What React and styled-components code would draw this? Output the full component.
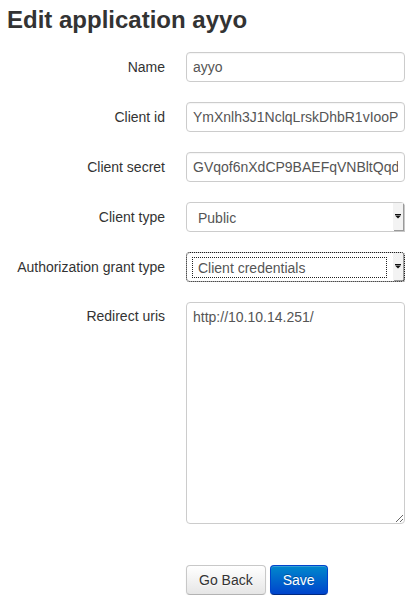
import styled, { createGlobalStyle } from 'styled-components';

const GlobalStyle = createGlobalStyle`
  html, body {
    margin: 0;
    padding: 0;
    background: #fff;
  }
  body {
    font-family: "Liberation Sans", Arial, sans-serif;
    font-size: 14px;
    color: #333;
  }
`;

const Page = styled.div`
  padding: 4px 13px 0 7px;
`;

const Title = styled.h2`
  margin: 0 0 16px 0;
  font-size: 24px;
  line-height: 32px;
  font-weight: bold;
  color: #333;
`;

const Form = styled.form`
  display: grid;
  grid-template-columns: 158px 219px;
  column-gap: 21px;
  row-gap: 20px;
  align-items: center;
`;

const Label = styled.label`
  text-align: right;
  font-size: 14px;
  color: #333;
  align-self: ${(p) => (p.top ? 'start' : 'center')};
  padding-top: ${(p) => (p.top ? '6px' : '0')};
  white-space: nowrap;
`;

const TextInput = styled.input`
  box-sizing: border-box;
  width: 219px;
  height: 30px;
  padding: 0 6px;
  border: 1px solid #ccc;
  border-radius: 4px;
  font-family: "Liberation Sans", Arial, sans-serif;
  font-size: 14px;
  color: #555;
  background: #fff;
  outline: none;
  box-shadow: inset 0 1px 1px rgba(0, 0, 0, 0.04);
`;

const SelectBox = styled.div`
  box-sizing: border-box;
  width: 219px;
  height: 30px;
  display: flex;
  align-items: stretch;
  border: 1px solid #ccc;
  border-radius: 4px;
  background: #fff;
  outline: ${(p) => (p.focused ? '1px dotted #222' : 'none')};
  outline-offset: -1px;
`;

const SelectValue = styled.div`
  flex: 1;
  display: flex;
  align-items: center;
  margin: 4px 6px 3px 5px;
  padding-left: 5px;
  border: 1px ${(p) => (p.focused ? 'dotted #222' : 'solid transparent')};
  color: #555;
  font-size: 14px;
`;

const ArrowButton = styled.div`
  width: 10px;
  margin: 0 1px 1px 0;
  display: flex;
  align-items: center;
  justify-content: center;
  background: #f3f3f3;
  box-shadow: 1px 1px 0 #9a9a9a, 2px 2px 0 #c8c8c8;
`;

const TextArea = styled.textarea`
  box-sizing: border-box;
  width: 219px;
  height: 222px;
  padding: 4px 6px;
  border: 1px solid #ccc;
  border-radius: 4px;
  font-family: "Liberation Sans", Arial, sans-serif;
  font-size: 14px;
  line-height: 20px;
  color: #555;
  resize: both;
  outline: none;
`;

const Actions = styled.div`
  display: flex;
  gap: 4px;
  margin: 41px 0 0 179px;
`;

const Button = styled.button`
  box-sizing: border-box;
  height: 30px;
  padding: 0 12px;
  border-radius: 4px;
  font-family: "Liberation Sans", Arial, sans-serif;
  font-size: 14px;
  cursor: pointer;
  color: ${(p) => (p.primary ? '#fff' : '#333')};
  border: 1px solid ${(p) => (p.primary ? '#0044cc' : '#c8c8c8')};
  border-bottom-color: ${(p) => (p.primary ? '#002a80' : '#b3b3b3')};
  background: ${(p) =>
    p.primary
      ? 'linear-gradient(to bottom, #0088cc, #0044cc)'
      : 'linear-gradient(to bottom, #ffffff, #e6e6e6)'};
  text-shadow: ${(p) => (p.primary ? '0 -1px 0 rgba(0,0,0,0.25)' : '0 1px 1px rgba(255,255,255,0.75)')};
  box-shadow: inset 0 1px 0 rgba(255, 255, 255, 0.2), 0 1px 2px rgba(0, 0, 0, 0.05);
`;

const Arrow = () => (
  <svg width="6" height="5" viewBox="0 0 6 5">
    <rect x="0" y="0" width="6" height="1" fill="#111" />
    <polygon points="0,1.5 6,1.5 3,4.5" fill="#111" />
  </svg>
);

function Select({ value, focused }) {
  return (
    <SelectBox focused={focused}>
      <SelectValue focused={focused}>{value}</SelectValue>
      <ArrowButton>
        <Arrow />
      </ArrowButton>
    </SelectBox>
  );
}

export default function App() {
  return (
    <>
      <GlobalStyle />
      <Page>
        <Title>Edit application ayyo</Title>
        <Form onSubmit={(e) => e.preventDefault()}>
          <Label>Name</Label>
          <TextInput defaultValue="ayyo" />

          <Label>Client id</Label>
          <TextInput defaultValue="YmXnlh3J1NclqLrskDhbR1vIooPqXk2" />

          <Label>Client secret</Label>
          <TextInput defaultValue="GVqof6nXdCP9BAEFqVNBltQqdWq7" />

          <Label>Client type</Label>
          <Select value="Public" />

          <Label>Authorization grant type</Label>
          <Select value="Client credentials" focused />

          <Label top>Redirect uris</Label>
          <TextArea defaultValue="http://10.10.14.251/" />
        </Form>
        <Actions>
          <Button type="button">Go Back</Button>
          <Button type="button" primary>
            Save
          </Button>
        </Actions>
      </Page>
    </>
  );
}
